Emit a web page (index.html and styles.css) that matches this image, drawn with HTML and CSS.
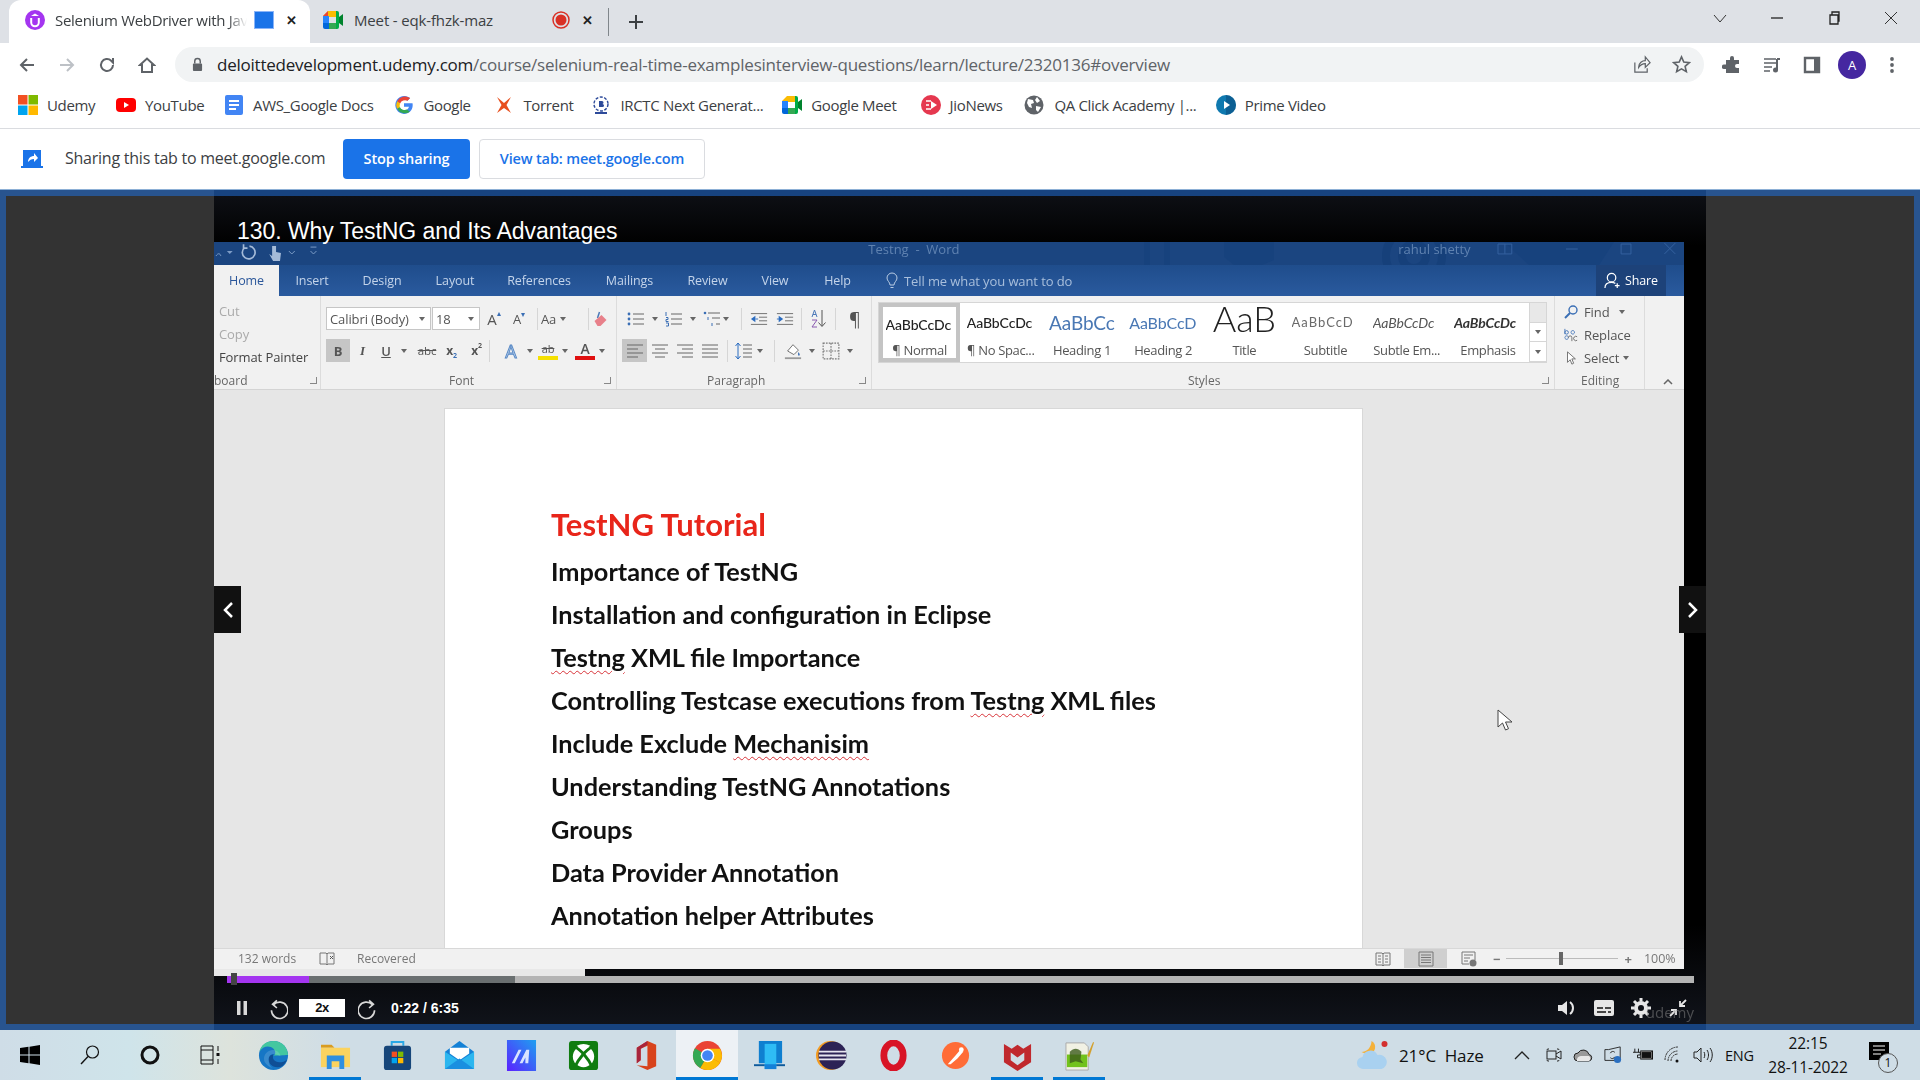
FILE: index.html
```html
<!DOCTYPE html>
<html lang="en">
<head>
    <meta charset="UTF-8">
    <title>Selenium WebDriver with Java</title>
    <link rel="stylesheet" href="styles.css">
</head>
<body>
    <svg class="sprite">
        <symbol id="i-bullets" viewBox="0 0 18 16"><g fill="#3b6fb5"><circle cx="2" cy="3" r="1.4"/><circle cx="2" cy="8" r="1.4"/><circle cx="2" cy="13" r="1.4"/></g><path d="M6 3h11M6 8h11M6 13h11" stroke="#666" fill="none"/></symbol>
        <symbol id="i-number" viewBox="0 0 18 16"><path d="M1 1v4M1 6.500h2v2H1v2h2.500M1 12h2.500v3H1" stroke="#3b6fb5" fill="none"/><path d="M6 3h11M6 8h11M6 13h11" stroke="#666" fill="none"/></symbol>
        <symbol id="i-multi" viewBox="0 0 18 16"><circle cx="2" cy="2" r="1.300" fill="#3b6fb5"/><path d="M5 6v3M9 12v3" stroke="#3b6fb5" fill="none"/><path d="M5 2h12M9 7h8M13 13h4" stroke="#666" fill="none"/></symbol>
        <symbol id="i-outdent" viewBox="0 0 20 16"><path d="M1 2h18M10 6h9M10 10h9M1 14h18" stroke="#666" fill="none"/><path d="M1 8l5-3.500v7z" fill="#2b6cc0"/><path d="M6 8h3" stroke="#2b6cc0"/></symbol>
        <symbol id="i-indent" viewBox="0 0 20 16"><path d="M1 2h18M10 6h9M10 10h9M1 14h18" stroke="#666" fill="none"/><path d="M8 8l-5-3.500v7z" fill="#2b6cc0"/><path d="M1 8h3" stroke="#2b6cc0"/></symbol>
        <symbol id="i-sort" viewBox="0 0 18 20"><path d="M12 1v16M8.500 13.500l3.500 4 3.500-4" stroke="#555" fill="none"/><path d="M2 8l2.500-7L7 8M3 5.500h3" stroke="#4a78b8" fill="none"/><path d="M2 11h5l-5 7h5" stroke="#8a5ab0" fill="none"/></symbol>
        <symbol id="i-left" viewBox="0 0 18 14"><path d="M1 1h16M1 5h11M1 9h16M1 13h11" stroke="#666" fill="none"/></symbol>
        <symbol id="i-center" viewBox="0 0 18 14"><path d="M1 1h16M4 5h10M1 9h16M4 13h10" stroke="#666" fill="none"/></symbol>
        <symbol id="i-right" viewBox="0 0 18 14"><path d="M1 1h16M6 5h11M1 9h16M6 13h11" stroke="#666" fill="none"/></symbol>
        <symbol id="i-justify" viewBox="0 0 18 14"><path d="M1 1h16M1 5h16M1 9h16M1 13h16" stroke="#666" fill="none"/></symbol>
        <symbol id="i-spacing" viewBox="0 0 18 20"><path d="M3 2v16M.5 5L3 2l2.500 3M.5 15L3 18l2.500-3" stroke="#2b6cc0" fill="none"/><path d="M8 4h9M8 8h9M8 12h9M8 16h9" stroke="#666" fill="none"/></symbol>
        <symbol id="i-shade" viewBox="0 0 20 20"><path d="M4 10l6-7 6 6-5 5z" fill="#fff" stroke="#666"/><path d="M16 11c1.500 2 2 3 1 4s-2-1-1-4z" fill="#3b6fb5"/><path d="M1 17h18v2H1z" fill="#9a9a9a"/></symbol>
        <symbol id="i-borders" viewBox="0 0 16 16"><path d="M1 1h14v14H1zM8 1v14M1 8h14" stroke="#777" stroke-dasharray="1.500 1" fill="none"/></symbol>
    </svg>

    <header class="tabstrip">
        <div class="tab tab-active">
            <svg class="tab-icon" viewBox="0 0 20 20"><circle cx="10" cy="10" r="10" fill="#a435f0"/><path d="M6.200 8v4.500a3.800 3.800 0 0 0 7.600 0V8" stroke="#fff" stroke-width="2" fill="none"/><path d="M10 3.500L14 6H6z" fill="#fff"/></svg>
            <span class="tab-title tab-title-fade">Selenium WebDriver with Jav</span>
            <svg class="share-mark" viewBox="0 0 20 18"><rect x=".5" y=".5" width="19" height="17" fill="#1a73e8" stroke="#8ab4f8"/></svg>
            <span class="tab-close">✕</span>
        </div>
        <div class="tab tab-idle">
            <svg class="tab-icon" viewBox="0 0 20 20"><path d="M0 6l5-5h8v6H6v6H0z" fill="#fbbc04"/><path d="M0 6h6v7H0z" fill="#2684fc"/><path d="M0 13h6v6H2a2 2 0 0 1-2-2z" fill="#0066da"/><path d="M6 13h7v6H6z" fill="#34a853"/><path d="M13 1v18h1a2 2 0 0 0 2-2V3a2 2 0 0 0-2-2z" fill="#00ac47"/><path d="M16 7l4-3v12l-4-3z" fill="#00832d"/><path d="M5 1v5H0z" fill="#ea4335"/></svg>
            <span class="tab-title tab-title-meet">Meet - eqk-fhzk-maz</span>
            <svg class="rec-mark" viewBox="0 0 18 18"><circle cx="9" cy="9" r="8" fill="none" stroke="#d93025" stroke-width="1.500"/><circle cx="9" cy="9" r="5.500" fill="#d93025"/></svg>
            <span class="tab-close">✕</span>
        </div>
        <span class="tab-sep"></span>
        <svg class="new-tab" viewBox="0 0 16 16"><path d="M8 1v14M1 8h14" stroke="#3c4043" stroke-width="2" fill="none"/></svg>
        <div class="window-btns">
            <svg class="win-btn" viewBox="0 0 14 14"><path d="M1 4l6 7 6-7" stroke="#333" fill="none"/></svg>
            <svg class="win-btn" viewBox="0 0 14 14"><path d="M1 7h12" stroke="#222" stroke-width="1.300" fill="none"/></svg>
            <svg class="win-btn" viewBox="0 0 14 14"><path d="M3 4h8v9H3zM5 4V1h7v9h-1" stroke="#222" stroke-width="1.300" fill="none"/></svg>
            <svg class="win-btn" viewBox="0 0 14 14"><path d="M1 1l12 12M13 1L1 13" stroke="#333" fill="none"/></svg>
        </div>
    </header>

    <div class="toolbar">
        <div class="nav-btns">
            <svg class="nav-icon" viewBox="0 0 18 18"><path d="M16 9H3M9 3L3 9l6 6" stroke="#5f6368" stroke-width="2" fill="none"/></svg>
            <svg class="nav-icon" viewBox="0 0 18 18"><path d="M2 9h13M9 3l6 6-6 6" stroke="#bdc1c6" stroke-width="2" fill="none"/></svg>
            <svg class="nav-icon" viewBox="0 0 18 18"><path d="M15 9a6 6 0 1 1-1.800-4.300L15 6.500V2" stroke="#5f6368" stroke-width="2" fill="none"/></svg>
            <svg class="nav-icon" viewBox="0 0 18 18"><path d="M2 9l7-6.500L16 9h-2v7H4V9z" stroke="#5f6368" stroke-width="2" fill="none"/></svg>
        </div>
        <div class="omnibox">
            <svg class="lock" viewBox="0 0 12 16"><path d="M3 7V4.500a3 3 0 0 1 6 0V7" stroke="#5f6368" stroke-width="1.600" fill="none"/><rect x="1" y="7" width="10" height="8" rx="1" fill="#5f6368"/></svg>
            <span class="url"><span class="url-host">deloittedevelopment.udemy.com</span>/course/selenium-real-time-examplesinterview-questions/learn/lecture/2320136#overview</span>
            <svg class="omni-icon omni-share" viewBox="0 0 20 20"><path d="M3 8v10h13v-4M7 13c0-5 4-7 7-7V2l5 6-5 5V9c-3 0-5 1-7 4z" stroke="#5f6368" stroke-width="1.300" fill="none"/></svg>
            <svg class="omni-icon" viewBox="0 0 20 20"><path d="M10 2l2.400 5.400 5.800.6-4.400 3.900 1.300 5.700-5.100-3-5.100 3 1.300-5.700L1.800 8l5.800-.6z" stroke="#5f6368" stroke-width="1.700" fill="none"/></svg>
        </div>
        <div class="ext-btns">
            <svg class="ext-icon" viewBox="0 0 20 20"><path d="M8 3a2 2 0 0 1 4 0v2h5v4h-2a2 2 0 0 0 0 4h2v5H4v-4H2a2.200 2.200 0 0 1 0-4.400h2V5h4z" fill="#5f6368"/></svg>
            <svg class="ext-icon" viewBox="0 0 20 20"><path d="M2 4h12M2 8h12M2 12h8M2 16h6" stroke="#5f6368" stroke-width="1.700" fill="none"/><path d="M15 4h3M15 4v11" stroke="#5f6368" stroke-width="2" fill="none"/><circle cx="13.500" cy="15" r="2.500" fill="#5f6368"/></svg>
            <svg class="ext-icon" viewBox="0 0 20 20"><path d="M3 3h14v14H3z" fill="none" stroke="#5f6368" stroke-width="2.400"/><path d="M12 3h5v14h-5z" fill="#5f6368"/></svg>
            <span class="avatar">A</span>
            <svg class="ext-icon" viewBox="0 0 20 20"><g fill="#5f6368"><circle cx="10" cy="4" r="1.900"/><circle cx="10" cy="10" r="1.900"/><circle cx="10" cy="16" r="1.900"/></g></svg>
        </div>
    </div>

    <nav class="bookmarks">
        <a class="bm bm-udemy"><svg viewBox="0 0 20 20"><path d="M0 0h9.500v9.500H0z" fill="#f25022"/><path d="M10.500 0H20v9.500h-9.500z" fill="#7fba00"/><path d="M0 10.500h9.500V20H0z" fill="#00a4ef"/><path d="M10.500 10.500H20V20h-9.500z" fill="#ffb900"/></svg>Udemy</a>
        <a class="bm bm-yt"><svg viewBox="0 0 20 20"><rect y="3" width="20" height="14" rx="4" fill="#f00"/><path d="M8 7l5 3-5 3z" fill="#fff"/></svg>YouTube</a>
        <a class="bm bm-docs"><svg viewBox="0 0 20 20"><rect x="1" width="18" height="20" rx="2" fill="#4285f4"/><path d="M5 6h10M5 10h10M5 14h7" stroke="#fff" stroke-width="2"/></svg>AWS_Google Docs</a>
        <a class="bm bm-google"><svg viewBox="0 0 20 20"><path d="M10 8.300v3.500h5c-.6 2.300-2.500 3.700-5 3.700a5.500 5.500 0 1 1 3.500-9.800l2.600-2.600A9 9 0 1 0 10 19c4.800 0 8.700-3.500 8.700-9 0-.6-.1-1.200-.2-1.700z" fill="#4285f4"/><path d="M3.100 6.200l3 2.200A5.500 5.500 0 0 1 13.500 5.700l2.600-2.600A9 9 0 0 0 3.100 6.200z" fill="#ea4335"/><path d="M3 13.700A9 9 0 0 0 15.900 16.800l-2.900-2.200a5.500 5.500 0 0 1-7.200-2.700z" fill="#34a853"/><path d="M3.100 6.200a9 9 0 0 0-.1 7.500l2.800-1.800a5.500 5.500 0 0 1 .3-3.500z" fill="#fbbc05"/></svg>Google</a>
        <a class="bm bm-torrent"><svg viewBox="0 0 20 20"><path d="M3 2l7 6 7-6-4.500 8L17 18l-7-5-7 5 4.500-8z" fill="#e8501e"/></svg>Torrent</a>
        <a class="bm bm-irctc"><svg viewBox="0 0 20 20"><circle cx="10" cy="9" r="7" fill="none" stroke="#2d4a9a" stroke-width="1.400" stroke-dasharray="3 1.500"/><path d="M8 6h3a1.500 1.500 0 0 1 0 3H8zM8 9h3.500a1.500 1.500 0 0 1 0 3H8z" fill="#2d4a9a"/><path d="M4 18h12" stroke="#2d4a9a" stroke-width="2"/></svg>IRCTC Next Generat...</a>
        <a class="bm bm-meet"><svg viewBox="0 0 20 20"><path d="M0 6l5-5h8v6H6v6H0z" fill="#fbbc04"/><path d="M0 6h6v7H0z" fill="#2684fc"/><path d="M0 13h6v6H2a2 2 0 0 1-2-2z" fill="#0066da"/><path d="M6 13h7v6H6z" fill="#34a853"/><path d="M13 1v18h1a2 2 0 0 0 2-2V3a2 2 0 0 0-2-2z" fill="#00ac47"/><path d="M16 7l4-3v12l-4-3z" fill="#00832d"/></svg>Google Meet</a>
        <a class="bm bm-jio"><svg viewBox="0 0 20 20"><circle cx="10" cy="10" r="10" fill="#e5384f"/><path d="M5 6h5M5 10h3M5 14h5" stroke="#fff" stroke-width="1.500"/><path d="M10 6l6 4-6 4z" fill="#fff"/></svg>JioNews</a>
        <a class="bm bm-qa"><svg viewBox="0 0 20 20"><circle cx="10" cy="10" r="9.500" fill="#5f6368"/><path d="M4 4l5 1 1 3-3 1 1 4-3-1-2-4zM13 2l3 4-3 2-2-3zM12 11l5 1-3 5-2-2z" fill="#fff"/></svg>QA Click Academy |...</a>
        <a class="bm bm-prime"><svg viewBox="0 0 20 20"><circle cx="10" cy="10" r="10" fill="#0f79af"/><path d="M10 0a10 10 0 0 1 0 20z" fill="#0a4f80" opacity=".6"/><path d="M8 6l6 4-6 4z" fill="#fff"/></svg>Prime Video</a>
    </nav>

    <div class="infobar">
        <svg class="info-icon" viewBox="0 0 24 20"><path d="M3 1h18v16H3z" fill="#1a73e8"/><path d="M1 17h22v2H1z" fill="#1a73e8"/><path d="M8 13c0-4 3-6 6-6V4l4 5-4 4v-3c-3 0-4 1-6 3z" fill="#fff"/></svg>
        <span class="info-text">Sharing this tab to meet.google.com</span>
        <button class="btn-stop">Stop sharing</button>
        <button class="btn-view">View tab: meet.google.com</button>
    </div>

    <main class="stage">
        <div class="side-panel"></div>
        <section class="player">
            <h1 class="lecture-title">130. Why TestNG and Its Advantages</h1>

            <div class="word">
                <div class="word-title">
                    <svg class="word-deco" viewBox="0 0 1470 23"><g fill="none" stroke="#16407a" stroke-width="8"><circle cx="1200" cy="14" r="28"/><circle cx="1200" cy="14" r="12"/></g><path d="M930 0h6v23h-6zM950 0h6v23h-6zM1010 0h50v18l-12 5h-28l-10-8z" fill="#17427d"/><path d="M1290 0h110l-15 23h-70z" fill="#17427d"/></svg>
                    <svg class="qat" viewBox="0 0 110 20"><path d="M2 13c2-3 4-3 5 0" stroke="#7d9cc6" fill="none"/><path d="M13 8l3 3 3-3" fill="#7d9cc6"/><path d="M36 3a6.500 6.500 0 1 1-5 1.500M30 1v4h4" stroke="#a5bbd8" stroke-width="1.700" fill="none"/><path d="M59 3v10l-3-2 4 7h7l1-8-5-1V3z" fill="#a5bbd8"/><path d="M76 8l3 3 3-3M98 4h6M98 8l3 3 3-3" stroke="#7d9cc6" fill="none"/></svg>
                    <span class="word-doc-name">Testng  -  Word</span>
                    <span class="word-user">rahul shetty</span>
                    <svg class="word-win" viewBox="0 0 190 14"><g stroke="#35629f" fill="none"><path d="M1 2h14v10H1zM8 2v10M70 7h12M126 2h10v10h-10zM170 1l11 11M181 1l-11 11"/></g></svg>
                </div>
                <div class="word-tabs">
                    <span class="wt wt-home">Home</span>
                    <span class="wt wt-insert">Insert</span>
                    <span class="wt wt-design">Design</span>
                    <span class="wt wt-layout">Layout</span>
                    <span class="wt wt-refs">References</span>
                    <span class="wt wt-mail">Mailings</span>
                    <span class="wt wt-review">Review</span>
                    <span class="wt wt-view">View</span>
                    <span class="wt wt-help">Help</span>
                    <span class="tell-me">
                        <svg viewBox="0 0 12 18"><path d="M4 13c0-3-3-4-3-7a5 5 0 0 1 10 0c0 3-3 4-3 7zM4.500 15.500h3" stroke="#b9cce4" fill="none"/></svg>
                        Tell me what you want to do
                    </span>
                    <span class="word-share">
                        <svg viewBox="0 0 18 18"><circle cx="8" cy="6" r="4.500" stroke="#fff" stroke-width="1.300" fill="none"/><path d="M1 17c0-4 3-6 7-6 2 0 3 .5 4 1M14 12v5M11.500 14.500h5" stroke="#fff" stroke-width="1.300" fill="none"/></svg>
                        Share
                    </span>
                </div>

                <div class="ribbon">
                    <div class="rgroup rg-clip">
                        <div class="rbody clip-body">
                            <span class="clip-item clip-dim">Cut</span>
                            <span class="clip-item clip-dim">Copy</span>
                            <span class="clip-item">Format Painter</span>
                        </div>
                        <div class="rlabel rlabel-clip"><span>board</span><i class="launcher"></i></div>
                    </div>

                    <div class="rgroup rg-font">
                        <div class="rbody">
                            <div class="rrow rrow-top">
                                <span class="field field-font">Calibri (Body)<i class="caret"></i></span>
                                <span class="field field-size">18<i class="caret"></i></span>
                                <span class="glyph g-grow">A<sup>▴</sup></span>
                                <span class="glyph g-shrink">A<sup>▾</sup></span>
                                <i class="rsep"></i>
                                <span class="glyph g-case">Aa<i class="caret"></i></span>
                                <i class="rsep"></i>
                                <svg class="g-eraser" viewBox="0 0 16 18"><path d="M8 2L6 8" stroke="#4a78b8" stroke-width="1.500"/><path d="M3 11l7-6 5 5-6 6H6z" fill="#e8808a"/></svg>
                            </div>
                            <div class="rrow">
                                <span class="glyph g-bold">B</span>
                                <span class="glyph g-italic">I</span>
                                <span class="glyph g-under">U</span><i class="caret caret-u"></i>
                                <span class="glyph g-abc">abc</span>
                                <span class="glyph g-script">x<sub>2</sub></span>
                                <span class="glyph g-script">x<sup>2</sup></span>
                                <i class="rsep"></i>
                                <span class="glyph g-effect">A</span><i class="caret caret-m"></i>
                                <span class="glyph g-mark">ab</span><i class="caret caret-m"></i>
                                <span class="glyph g-color">A</span><i class="caret caret-m"></i>
                            </div>
                        </div>
                        <div class="rlabel rlabel-font"><span>Font</span><i class="launcher"></i></div>
                    </div>

                    <div class="rgroup rg-para">
                        <div class="rbody">
                            <div class="rrow rrow-top rrow-para">
                                <svg class="pi pi-first"><use href="#i-bullets"/></svg><i class="caret caret-p"></i>
                                <svg class="pi"><use href="#i-number"/></svg><i class="caret caret-p"></i>
                                <svg class="pi pi-tight"><use href="#i-multi"/></svg><i class="caret"></i>
                                <i class="rsep sep-list"></i>
                                <svg class="pi"><use href="#i-outdent"/></svg>
                                <svg class="pi"><use href="#i-indent"/></svg>
                                <i class="rsep sep-indent"></i>
                                <svg class="pi pi-sort"><use href="#i-sort"/></svg>
                                <i class="rsep sep-indent"></i>
                                <span class="pilcrow">¶</span>
                            </div>
                            <div class="rrow rrow-para">
                                <span class="align-on"><svg class="pi-in"><use href="#i-left"/></svg></span>
                                <svg class="pi-al pi-al-first"><use href="#i-center"/></svg>
                                <svg class="pi-al"><use href="#i-right"/></svg>
                                <svg class="pi-al"><use href="#i-justify"/></svg>
                                <i class="rsep sep-align"></i>
                                <svg class="pi pi-sp"><use href="#i-spacing"/></svg><i class="caret"></i>
                                <i class="rsep sep-space"></i>
                                <svg class="pi pi-sp"><use href="#i-shade"/></svg><i class="caret caret-p"></i>
                                <svg class="pi pi-sp"><use href="#i-borders"/></svg><i class="caret caret-p"></i>
                            </div>
                        </div>
                        <div class="rlabel rlabel-para"><span>Paragraph</span><i class="launcher"></i></div>
                    </div>

                    <div class="rgroup rg-styles">
                        <div class="rbody gallery-wrap">
                            <div class="gallery">
                                <div class="style-card style-sel"><span class="sample s-normal">AaBbCcDc</span><span class="style-name">¶ Normal</span></div>
                                <div class="style-card"><span class="sample s-normal">AaBbCcDc</span><span class="style-name">¶ No Spac...</span></div>
                                <div class="style-card"><span class="sample s-h1">AaBbCc</span><span class="style-name">Heading 1</span></div>
                                <div class="style-card"><span class="sample s-h2">AaBbCcD</span><span class="style-name">Heading 2</span></div>
                                <div class="style-card"><span class="sample s-title">AaB</span><span class="style-name">Title</span></div>
                                <div class="style-card"><span class="sample s-sub">AaBbCcD</span><span class="style-name">Subtitle</span></div>
                                <div class="style-card"><span class="sample s-em">AaBbCcDc</span><span class="style-name">Subtle Em...</span></div>
                                <div class="style-card"><span class="sample s-emph">AaBbCcDc</span><span class="style-name">Emphasis</span></div>
                                <div class="gallery-scroll"><span></span><span><i class="caret"></i></span><span><i class="caret"></i></span></div>
                            </div>
                        </div>
                        <div class="rlabel rlabel-styles"><span>Styles</span><i class="launcher"></i></div>
                    </div>

                    <div class="rgroup rg-edit">
                        <div class="rbody clip-body edit-body">
                            <span class="edit-item"><svg viewBox="0 0 14 14"><circle cx="9" cy="5" r="4" fill="none" stroke="#3b6fb5" stroke-width="1.400"/><path d="M6 8l-5 5" stroke="#3b6fb5" stroke-width="2"/></svg>Find<i class="caret"></i></span>
                            <span class="edit-item"><svg viewBox="0 0 16 16"><path d="M1 1v6M1 5a2 2 0 1 1 4 0 2 2 0 1 1-4 0M8 5a2 2 0 1 0 0-.1M1 11a2 2 0 1 0 0-.1" stroke="#3b6fb5" fill="none"/><path d="M5 11a2 2 0 1 1 4 0v4M15 10a2.500 2.500 0 1 0 0 4" stroke="#666" fill="none"/></svg>Replace</span>
                            <span class="edit-item"><svg viewBox="0 0 14 16"><path d="M3 1v12l3-3 2 5 2-1-2-5h4z" fill="#fff" stroke="#666"/></svg>Select<i class="caret caret-tight"></i></span>
                        </div>
                        <div class="rlabel rlabel-edit"><span>Editing</span></div>
                    </div>
                    <svg class="ribbon-collapse" viewBox="0 0 10 6"><path d="M1 5l4-4 4 4" stroke="#666" stroke-width="1.500" fill="none"/></svg>
                </div>

                <div class="doc">
                    <article class="page">
                        <h2 class="doc-title">TestNG Tutorial</h2>
                        <ul class="doc-list">
                            <li>Importance of TestNG</li>
                            <li>Installation and configuration in Eclipse</li>
                            <li><u>Testng</u> XML file Importance</li>
                            <li>Controlling Testcase executions from <u>Testng</u> XML files</li>
                            <li>Include Exclude <u>Mechanisim</u></li>
                            <li>Understanding TestNG Annotations</li>
                            <li>Groups</li>
                            <li>Data Provider Annotation</li>
                            <li>Annotation helper Attributes</li>
                        </ul>
                    </article>
                </div>

                <footer class="word-status">
                    <span class="ws-words">132 words</span>
                    <svg class="ws-book" viewBox="0 0 16 16"><path d="M1 2h6l1 1v11l-1-1H1zM8 3l1-1h6v11H9l-1 1" stroke="#777" fill="none"/><path d="M11 5l3 3M14 5l-3 3" stroke="#555"/></svg>
                    <span class="ws-rec">Recovered</span>
                    <svg class="ws-view ws-read" viewBox="0 0 16 16"><path d="M1 2h6l1 1 1-1h6v12H9l-1 1-1-1H1zM8 3v11M3 5h3M3 8h3M3 11h3M10 5h3M10 8h3M10 11h3" stroke="#777" fill="none"/></svg>
                    <span class="ws-print"><svg viewBox="0 0 16 16"><path d="M1 1h14v14H1zM3 4h10M3 6.500h10M3 9h10M3 11.500h10" stroke="#777" fill="none"/></svg></span>
                    <svg class="ws-view ws-web" viewBox="0 0 16 16"><path d="M1 1h13v8M1 1v12h7M3 4h9M3 7h6M3 10h4" stroke="#777" fill="none"/><circle cx="12" cy="12" r="3.500" fill="#777"/></svg>
                    <span class="zoom-minus">−</span>
                    <span class="zoom-track"><i class="zoom-thumb"></i></span>
                    <span class="zoom-plus">+</span>
                    <span class="zoom-pct">100%</span>
                </footer>
            </div>

            <div class="word-tail"></div>
            <div class="progress">
                <span class="progress-buffer"></span>
                <span class="progress-fill"></span>
                <i class="progress-thumb"></i>
            </div>
            <div class="controls">
                <svg class="ctl ctl-pause" viewBox="0 0 12 16"><path d="M1 1h3.500v14H1zM7.500 1H11v14H7.500z" fill="#d8d8d8"/></svg>
                <svg class="ctl ctl-seek" viewBox="0 0 18 22"><path d="M7 1L3 4.500 7 8M4 5a7.500 7.500 0 1 1-2 5" transform="translate(1 3)" stroke="#d8d8d8" stroke-width="1.500" fill="none"/></svg>
                <span class="speed">2x</span>
                <svg class="ctl ctl-seek" viewBox="0 0 18 22"><path d="M10 1l4 3.500L10 8M13 5a7.500 7.500 0 1 0 2 5" transform="translate(0 3)" stroke="#d8d8d8" stroke-width="1.500" fill="none"/></svg>
                <span class="time">0:22 / 6:35</span>
                <div class="ctl-right">
                    <svg class="ctl-r" viewBox="0 0 20 18"><path d="M1 6h4l5-4v14l-5-4H1z" fill="#e6e6e6"/><path d="M13 3c4 3 4 9 0 12" stroke="#e6e6e6" stroke-width="2" fill="none"/></svg>
                    <svg class="ctl-r" viewBox="0 0 20 18"><rect y="1" width="20" height="16" rx="2" fill="#e6e6e6"/><path d="M3 9h6M11 9h6M3 13h9M14 13h3" stroke="#111" stroke-width="1.500"/></svg>
                    <svg class="ctl-r" viewBox="0 0 20 20"><circle cx="10" cy="10" r="5" fill="none" stroke="#e6e6e6" stroke-width="4"/><path d="M10 0v20M0 10h20M3 3l14 14M17 3L3 17" stroke="#e6e6e6" stroke-width="3" stroke-dasharray="3.500 13 3.500 0"/></svg>
                    <svg class="ctl-r" viewBox="0 0 20 20"><path d="M12 8l6-6M12 3v5h5M8 12l-6 6M3 12h5v5" stroke="#e6e6e6" stroke-width="1.800" fill="none"/></svg>
                </div>
                <span class="watermark">udemy</span>
            </div>

            <button class="slide-nav slide-prev"><svg viewBox="0 0 12 18"><path d="M10 2L3 9l7 7" stroke="#fff" stroke-width="2.500" fill="none"/></svg></button>
            <button class="slide-nav slide-next"><svg viewBox="0 0 12 18"><path d="M2 2l7 7-7 7" stroke="#fff" stroke-width="2.500" fill="none"/></svg></button>
            <svg class="pointer" viewBox="0 0 16 22"><path d="M1 1v17l4.500-4 3 7 3-1.300-3-6.700H15z" fill="#fff" stroke="#444"/></svg>
        </section>
        <div class="side-panel"></div>
    </main>

    <footer class="taskbar">
        <div class="sys-btns">
            <span class="slot"><svg class="ti-sm" viewBox="0 0 20 20"><path d="M0 3l8.500-1.200v7.700H0zM9.500 1.700L20 0v9.500H9.500zM0 10.500h8.500v7.700L0 17zM9.500 10.500H20V20L9.500 18.300z" fill="#000"/></svg></span>
            <span class="slot"><svg class="ti-sm" viewBox="0 0 20 20"><circle cx="12.500" cy="7" r="6" fill="none" stroke="#111" stroke-width="1.200"/><path d="M8 11.500L1 19" stroke="#111" stroke-width="1.400"/></svg></span>
            <span class="slot"><svg class="ti-sm" viewBox="0 0 20 20"><circle cx="10" cy="10" r="8" fill="none" stroke="#111" stroke-width="3"/></svg></span>
            <span class="slot"><svg class="ti-sm" viewBox="0 0 20 20"><path d="M1 1h12M1 5h12v10H1zM1 19h12M1 15v4M13 15v4M1 1v4M13 1v4M18 1v5M18 14v5" stroke="#111" fill="none"/><rect x="16.500" y="8" width="3" height="3" fill="#111"/></svg></span>
        </div>
        <div class="app-btns">
            <span class="slot-app"><svg class="ti" viewBox="0 0 32 32"><circle cx="16" cy="16" r="15" fill="#1676c5"/><path d="M31 16c0-8-6-15-15-15C9 1 3 5 1.500 12 5 6 12 5 16 9c3 3 2 7-1 7h8c5 0 8-1 8 0z" fill="#43c7a0"/><path d="M25 27c-7 3-14-1-14-7 0-3 2-5 5-5-2 4 1 8 6 8 3 0 6-1 8-3-1 3-3 5-5 7z" fill="#0f4f96"/><path d="M11 20c0-4 3-7 8-5 3 1 4 2 4 1-1-4-6-7-11-5-5 2-7 7-5 12 2 3 5 5 8 6-3-2-4-5-4-9z" fill="#fff" opacity=".15"/></svg></span>
            <span class="slot-app on"><svg class="ti" viewBox="0 0 32 32"><path d="M1 5h11l3 3h-14z" fill="#d99c20"/><rect x="1" y="8" width="30" height="20" fill="#fbd35f"/><path d="M7 16h18v14h-5v-8h-8v8H7z" fill="#2f8fe0"/></svg></span>
            <span class="slot-app"><svg class="ti" viewBox="0 0 32 32"><path d="M10 6V2h12v4" stroke="#29a8e6" stroke-width="2" fill="none"/><rect x="2" y="6" width="28" height="25" rx="3" fill="#17467a"/><path d="M10 12h5.500v5.500H10z" fill="#f25022"/><path d="M16.500 12H22v5.500h-5.500z" fill="#7fba00"/><path d="M10 18.500h5.500V24H10z" fill="#00a4ef"/><path d="M16.500 18.500H22V24h-5.500z" fill="#ffb900"/></svg></span>
            <span class="slot-app"><svg class="ti" viewBox="0 0 32 32"><path d="M1 12L16 1l15 11v18H1z" fill="#1481d6"/><path d="M6 8h20v6l-10 7-10-7z" fill="#fff"/><path d="M1 12l15 10 15-10v18H1z" fill="#2cb6ef"/><path d="M1 30l15-11 15 11z" fill="#1a8fe0"/></svg></span>
            <span class="slot-app"><svg class="ti" viewBox="0 0 32 32"><defs><linearGradient id="ma" x1="0" y1="1" x2="1" y2="0"><stop offset="0" stop-color="#5b21ff"/><stop offset="1" stop-color="#1ea0f0"/></linearGradient></defs><rect x="1" y="0" width="30" height="32" fill="url(#ma)"/><path d="M6 24l7-14h3l-7 14zM14 24l7-14h3l-1 14h-3v-6l-3 6z" fill="#d9e4ff"/></svg></span>
            <span class="slot-app"><svg class="ti" viewBox="0 0 32 32"><rect x="1" y="1" width="30" height="30" rx="3" fill="#107c10"/><circle cx="16" cy="17" r="11" fill="#fff"/><path d="M7 7c6 3 14 12 18 21M25 7C19 10 11 19 7 28" stroke="#107c10" stroke-width="3" fill="none"/><path d="M9 6q7-4 14 0l-7 5z" fill="#fff"/></svg></span>
            <span class="slot-app"><svg class="ti" viewBox="0 0 32 32"><path d="M18 1l9 4v22l-9 4-11-5 11 1V6l-7 3v12l-4 3V8z" fill="#d8431c"/><path d="M7 8l11-7v4l-7 4v12l-4 3z" fill="#a8243c"/></svg></span>
            <span class="slot-app on active"><svg class="ti" viewBox="0 0 32 32"><circle cx="16" cy="16" r="15" fill="#ea4335"/><path d="M16 16L29 23.500A15 15 0 0 1 8.500 29z" fill="#fbbc04"/><path d="M16 16L8.500 29A15 15 0 0 1 3 8.500z" fill="#34a853"/><path d="M16 9h13a15 15 0 0 1 0 14.500L16 16z" fill="#fbbc04"/><circle cx="16" cy="16" r="7" fill="#fff"/><circle cx="16" cy="16" r="5.500" fill="#4285f4"/></svg></span>
            <span class="slot-app"><svg class="ti" viewBox="0 0 32 32"><path d="M5 1h24v23H5z" fill="#0f7fd0"/><path d="M0 25h32v2H0z" fill="#0d5a9c"/><rect x="11" y="4" width="12" height="26" fill="#2fbcf5"/><rect x="11" y="25" width="12" height="5" fill="#1480d8"/></svg></span>
            <span class="slot-app"><svg class="ti" viewBox="0 0 32 32"><circle cx="15" cy="16" r="15" fill="#f39b21"/><circle cx="17" cy="16" r="14.500" fill="#2c2255"/><path d="M3 12h28M3 16h28M3 20h28" stroke="#e8e6f0" stroke-width="2"/></svg></span>
            <span class="slot-app"><svg class="ti" viewBox="0 0 32 32"><ellipse cx="16" cy="16" rx="10" ry="13" fill="none" stroke="#d81426" stroke-width="7"/></svg></span>
            <span class="slot-app"><svg class="ti" viewBox="0 0 32 32"><circle cx="16" cy="16" r="14" fill="#ff6c37"/><path d="M8 25l8-9 5-6 3 2-6 7-7 6z" fill="#fff"/><circle cx="22" cy="10" r="2.500" fill="#fff"/></svg></span>
            <span class="slot-app on"><svg class="ti" viewBox="0 0 32 32"><path d="M2 4l8 5 6-4 6 4 8-5v19l-14 9-14-9z" fill="#c0282d"/><path d="M9 13l7 5 7-5v8l-7 5-7-5z" fill="#cfdde6"/></svg></span>
            <span class="slot-app on"><svg class="ti" viewBox="0 0 32 32"><path d="M2 3h19l4 4v24H2z" fill="#f1f1e4" stroke="#aaa"/><path d="M3 15h21v13H3z" fill="#72c21c"/><path d="M6 12c4-4 8-4 12 0l-1 8 3 4-8-2-6 2z" fill="#3d5c1c" opacity=".8"/><path d="M24 16L30 2l1 .500L26 18z" fill="#d4a02d"/></svg></span>
        </div>
        <div class="tray">
            <svg class="weather" viewBox="0 0 32 30"><path d="M14 1a7 7 0 0 1-2 13c-3 0-6-1-8-2 2 0 5-1 7-3 2-3 3-5 3-8z" fill="#f4b13a"/><circle cx="27" cy="4" r="3" fill="#d32f2f"/><path d="M6 29a6 6 0 0 1-1-12 8 8 0 0 1 15-2 7 7 0 0 1 4 14z" fill="#a9d1f0"/></svg>
            <span class="tray-weather">21°C&nbsp; Haze</span>
            <svg class="t-chev" viewBox="0 0 16 10"><path d="M1 9l7-7 7 7" stroke="#222" stroke-width="1.300" fill="none"/></svg>
            <svg class="t-ico" viewBox="0 0 18 18"><path d="M3 4a1 1 0 0 1 1-1h1M13 3h1a1 1 0 0 1 1 1M3 14a1 1 0 0 0 1 1h1M15 14a1 1 0 0 1-1 1h-1" stroke="#222" fill="none"/><rect x="3" y="5" width="9" height="8" fill="none" stroke="#222"/><path d="M12 8l5-3v8l-5-3" fill="none" stroke="#222"/></svg>
            <svg class="t-ico" viewBox="0 0 20 16"><path d="M5 14a4 4 0 0 1 0-8 6 6 0 0 1 11 1.500 3.300 3.300 0 0 1 0 6.500z" fill="#9a9a9a" stroke="#222"/><path d="M4 14a4 4 0 0 1 4-5h8a3 3 0 0 1 0 5z" fill="#e8e8e8"/></svg>
            <svg class="t-ico" viewBox="0 0 20 20"><path d="M1 4h4l13-3v14l-4 1H1z" fill="none" stroke="#222"/><path d="M7 8a3 3 0 0 1 5-1M12 12a3 3 0 0 1-5 1" stroke="#222" fill="none"/><circle cx="15" cy="15" r="4" fill="#2a6fc0"/></svg>
            <svg class="t-ico" viewBox="0 0 22 14"><path d="M2 0v4M6 0v4M0 4h8v3H5v3h3" stroke="#111" fill="none"/><rect x="8" y="2" width="14" height="10" fill="#111"/><rect x="9.500" y="3.500" width="11" height="7" fill="#111" stroke="#ddd" stroke-width=".5"/></svg>
            <svg class="t-ico" viewBox="0 0 18 18"><path d="M1 14A13 13 0 0 1 14 1M4 15a10 10 0 0 1 10-10M7 15a7 7 0 0 1 7-7" stroke="#333" fill="none" stroke-dasharray="2 .6"/><circle cx="13" cy="15" r="1.500" fill="#111"/></svg>
            <svg class="t-ico" viewBox="0 0 20 18"><path d="M1 6h3l4-4v14l-4-4H1z" fill="none" stroke="#222"/><path d="M11 6c1 2 1 4 0 6M14 4c2 3 2 7 0 10M17 2c3 4 3 10 0 14" stroke="#222" fill="none"/></svg>
            <span class="tray-lang">ENG</span>
            <div class="clock"><span>22:15</span><span>28-11-2022</span></div>
            <span class="notify">
                <svg viewBox="0 0 20 18"><path d="M0 0h20v18H0z" fill="#000"/><path d="M4 4h12M4 8h12M4 12h8" stroke="#fff"/></svg>
                <b class="notify-count">1</b>
            </span>
        </div>
    </footer>
</body>
</html>
```

FILE: styles.css
```css
* {
    box-sizing: border-box;
}
html, body {
    margin: 0;
    padding: 0;
    height: 1080px;
    overflow: hidden;
}
body {
    width: 1920px;
    display: flex;
    flex-direction: column;
    font-family: "Open Sans", "Liberation Sans", sans-serif;
    background: #fff;
    color: #3c4043;
}
.sprite {
    display: none;
}

/* browser tabs */
.tabstrip {
    height: 43px;
    flex: none;
    display: flex;
    align-items: center;
    background: #dee1e6;
    padding-left: 9px;
}
.tab {
    height: 43px;
    display: flex;
    align-items: center;
    padding-bottom: 3px;
    font-size: 15px;
    letter-spacing: -.15px;
}
.tab-active {
    width: 301px;
    background: #fff;
    border-radius: 12px 12px 0 0;
    padding-left: 16px;
}
.tab-idle {
    width: 298px;
    padding-left: 13px;
}
.tab-icon {
    width: 20px;
    height: 20px;
    flex: none;
}
.tab-title {
    margin-left: 10px;
    white-space: nowrap;
    overflow: hidden;
}
.tab-title-fade {
    width: 192px;
    letter-spacing: -.3px;
    -webkit-mask-image: linear-gradient(90deg, #000 90%, transparent);
    mask-image: linear-gradient(90deg, #000 90%, transparent);
}
.tab-title-meet {
    margin-left: 11px;
    width: 198px;
}
.share-mark {
    width: 20px;
    height: 18px;
    margin-left: 7px;
    flex: none;
}
.rec-mark {
    width: 18px;
    height: 18px;
    flex: none;
}
.tab-close {
    font-size: 13px;
    color: #222;
    margin-left: 12px;
    font-weight: 700;
}
.tab-sep {
    width: 1px;
    height: 28px;
    background: #80868b;
}
.new-tab {
    width: 16px;
    height: 16px;
    margin-left: 19px;
}
.window-btns {
    margin-left: auto;
    width: 207px;
    display: flex;
    justify-content: space-between;
    padding: 0 22px 7px 0;
}
.win-btn {
    width: 14px;
    height: 14px;
}

/* toolbar */
.toolbar {
    height: 43px;
    flex: none;
    display: flex;
    align-items: center;
    background: #fff;
}
.nav-btns {
    width: 175px;
    display: flex;
    padding-left: 18px;
    gap: 22px;
}
.nav-icon {
    width: 18px;
    height: 18px;
}
.omnibox {
    width: 1529px;
    height: 35px;
    border-radius: 18px;
    background: #f1f3f4;
    display: flex;
    align-items: center;
    padding: 0 13px 0 17px;
}
.lock {
    width: 11px;
    height: 15px;
    flex: none;
}
.url {
    margin-left: 14px;
    font-size: 17px;
    letter-spacing: -.23px;
    color: #5f6368;
    white-space: nowrap;
}
.url-host {
    color: #202124;
}
.omni-icon {
    width: 19px;
    height: 19px;
    flex: none;
    margin-left: 21px;
}
.omni-share {
    margin-left: auto;
}
.ext-btns {
    flex: 1;
    display: flex;
    align-items: center;
    padding-left: 18px;
    gap: 20px;
}
.ext-icon {
    width: 20px;
    height: 20px;
    flex: none;
}
.avatar {
    width: 28px;
    height: 28px;
    margin: 0 -4px;
    border-radius: 50%;
    background: #4527a0;
    color: #fff;
    font-size: 13px;
    display: flex;
    align-items: center;
    justify-content: center;
    flex: none;
}

/* bookmarks */
.bookmarks {
    height: 43px;
    flex: none;
    display: flex;
    align-items: center;
    padding: 0 0 4px 18px;
    border-bottom: 1px solid #dadce0;
    font-size: 15px;
    letter-spacing: -.33px;
    color: #3c4043;
}
.bm {
    display: flex;
    align-items: center;
    white-space: nowrap;
}
.bm svg {
    width: 20px;
    height: 20px;
    margin-right: 9px;
    flex: none;
}
.bm-udemy { width: 98px; }
.bm-yt { width: 108px; }
.bm-docs { width: 170.400px; }
.bm-google { width: 100px; }
.bm-torrent { width: 97px; }
.bm-irctc { width: 190.800px; }
.bm-meet { width: 138.400px; }
.bm-jio { width: 103.800px; }
.bm-qa { width: 191.400px; }
.bm-qa svg { margin-right: 10px; }

/* sharing infobar */
.infobar {
    height: 60px;
    flex: none;
    display: flex;
    align-items: center;
    padding-left: 20px;
    background: #fff;
}
.info-icon {
    width: 24px;
    height: 20px;
    flex: none;
}
.info-text {
    margin: 0 0 2px 21px;
    width: 278px;
    font-size: 16px;
    letter-spacing: -.24px;
    color: #3c4043;
    white-space: nowrap;
}
.btn-stop, .btn-view {
    height: 40px;
    padding: 0 0 2px;
    border-radius: 4px;
    font: 600 14.500px "Open Sans", sans-serif;
    letter-spacing: -.15px;
    cursor: pointer;
}
.btn-stop {
    width: 127px;
    background: #1a73e8;
    border: none;
    color: #fff;
}
.btn-view {
    width: 226px;
    margin-left: 9px;
    background: #fff;
    border: 1px solid #dadce0;
    color: #1a73e8;
}

/* shared tab content */
.stage {
    flex: 1;
    min-height: 0;
    display: flex;
    padding: 6px;
    border-top: 1px solid #8db0d6;
    background: linear-gradient(90deg, #28548f 214px, #17437f 214px, #17437f 1706px, #28548f 1706px);
}
.side-panel {
    width: 208px;
    background: #333;
}
.player {
    width: 1492px;
    position: relative;
    display: flex;
    flex-direction: column;
    background: linear-gradient(#0d0f14, #000 6%, #000 88%, #10131a);
}
.lecture-title {
    height: 46px;
    margin: 0;
    padding: 22px 0 0 23px;
    font: 400 23px/26px "Liberation Sans", sans-serif;
    letter-spacing: -.04px;
    color: #fff;
    position: relative;
    z-index: 1;
}

/* word window */
.word {
    width: 1470px;
    display: flex;
    flex-direction: column;
    font-family: "Open Sans", sans-serif;
    filter: blur(.35px);
}
.word-title {
    height: 23px;
    position: relative;
    display: flex;
    align-items: flex-start;
    background: #1b4580;
    overflow: hidden;
    font-size: 13px;
    line-height: 15px;
    color: #5f82b0;
}
.word-deco {
    position: absolute;
    left: 0;
    top: 0;
    width: 1470px;
    height: 23px;
}
.qat {
    width: 110px;
    height: 20px;
    margin: 1px 0 0 0;
    position: relative;
}
.word-doc-name {
    margin: 0 0 0 546px;
    width: 538px;
    white-space: pre;
    position: relative;
}
.word-user {
    position: relative;
    width: 90px;
}
.word-win {
    width: 190px;
    height: 14px;
    margin: 0 0 0 10px;
    position: relative;
}
.word-tabs {
    height: 31px;
    display: flex;
    align-items: center;
    background: linear-gradient(#1f4d8c, #2a5a9e);
    font-size: 12.500px;
    letter-spacing: -.1px;
    color: #c4d4ea;
}
.wt {
    text-align: center;
    height: 100%;
    line-height: 31px;
}
.wt-home {
    width: 65px;
    background: #f1f1f1;
    color: #2b579a;
}
.wt-insert { width: 66px; }
.wt-design { width: 74px; }
.wt-layout { width: 72px; }
.wt-refs { width: 96px; }
.wt-mail { width: 85px; }
.wt-review { width: 71px; }
.wt-view { width: 64px; }
.wt-help { width: 61px; }
.tell-me {
    margin-left: 18px;
    display: flex;
    align-items: center;
    gap: 6px;
    font-size: 13px;
    color: #a9bfdc;
}
.tell-me svg {
    width: 12px;
    height: 18px;
}
.word-share {
    margin-left: auto;
    margin-right: 18px;
    width: 70px;
    height: 100%;
    background: #1d4279;
    color: #fff;
    display: flex;
    align-items: center;
    justify-content: center;
    gap: 4px;
}
.word-share svg {
    width: 17px;
    height: 17px;
}

/* ribbon */
.ribbon {
    height: 94px;
    display: flex;
    background: #f1f1f1;
    border-bottom: 1px solid #d4d4d4;
    font-size: 12px;
    letter-spacing: -.1px;
    color: #555;
}
.rgroup {
    display: flex;
    flex-direction: column;
    padding-top: 11px;
    overflow: hidden;
    border-right: 1px solid #dcdcdc;
}
.rbody {
    height: 65px;
    flex: none;
}
.rlabel {
    height: 17px;
    flex: none;
    display: flex;
    align-items: center;
    color: #666;
    font-size: 12px;
    letter-spacing: 0;
}
.launcher {
    width: 7px;
    height: 7px;
    margin-left: auto;
    border-right: 1px solid #888;
    border-bottom: 1px solid #888;
}
.rg-clip {
    width: 107px;
}
.clip-body {
    display: flex;
    flex-direction: column;
    margin-top: -7px;
    height: 72px;
}
.clip-item {
    height: 23px;
    line-height: 23px;
    padding-left: 5px;
    white-space: nowrap;
    font-size: 13px;
    color: #444;
}
.clip-dim {
    color: #aaa;
}
.rlabel-clip {
    padding: 0 3px 0 0;
}
.rg-font {
    width: 296px;
}
.rrow {
    height: 23px;
    display: flex;
    align-items: center;
    padding-left: 5px;
}
.rrow-top {
    height: 23px;
    margin-bottom: 9px;
}
.field {
    height: 23px;
    flex: none;
    background: #fff;
    border: 1px solid #c6c6c6;
    display: flex;
    align-items: center;
    padding-left: 3px;
    font-size: 13px;
    color: #555;
    white-space: nowrap;
}
.field-font {
    width: 105px;
}
.field-size {
    width: 48px;
    margin-left: 1px;
}
.field .caret {
    margin-left: auto;
    margin-right: 5px;
}
.caret {
    display: inline-block;
    width: 0;
    height: 0;
    border: 3px solid transparent;
    border-top: 4px solid #666;
    border-bottom: 0;
    flex: none;
}
.caret-u {
    margin: 0 8px 0 4px;
}
.caret-m {
    margin: 0 5px 0 4px;
}
.caret-p {
    margin: 0 3px;
}
.glyph {
    display: flex;
    align-items: center;
    justify-content: center;
    font-family: "Open Sans", sans-serif;
    color: #555;
    flex: none;
}
.glyph sup, .glyph sub {
    font-size: 8px;
    line-height: 1;
}
.g-grow {
    width: 24px;
    margin-left: 2px;
    font-size: 15px;
}
.g-shrink {
    width: 24px;
    margin-left: 1px;
    font-size: 13px;
}
.g-grow sup, .g-shrink sup {
    color: #3b6fb5;
    align-self: flex-start;
}
.g-case {
    width: 41px;
    font-size: 13px;
    gap: 4px;
    justify-content: flex-start;
    margin-left: -3px;
}
.g-eraser {
    width: 17px;
    height: 18px;
    margin-left: -4px;
}
.rsep {
    width: 1px;
    height: 22px;
    background: #d6d6d6;
    flex: none;
}
.g-bold {
    width: 24px;
    height: 23px;
    background: #c6c6c6;
    font-weight: 700;
    font-size: 13px;
}
.g-italic {
    width: 25px;
    font-style: italic;
    font-family: "Liberation Serif", serif;
    font-weight: 700;
    font-size: 13px;
}
.g-under {
    width: 22px;
    text-decoration: underline;
    font-size: 13px;
    font-weight: 600;
}
.g-abc {
    width: 24px;
    text-decoration: line-through;
    font-size: 11.500px;
}
.g-script {
    width: 25px;
    font-weight: 700;
    font-size: 12px;
}
.g-script sub, .g-script sup {
    font-size: 7px;
}
.g-script sub {
    color: #3b6fb5;
    align-self: flex-end;
}
.g-script sup {
    align-self: flex-start;
}
.g-effect {
    width: 24px;
    margin-left: 9px;
    font-size: 18px;
    color: #d9e6f5;
    -webkit-text-stroke: 1px #5a8ac6;
}
.g-mark {
    width: 20px;
    font-size: 11px;
    height: 18px;
    border-bottom: 4px solid #f5e000;
    line-height: 1;
    text-decoration: line-through;
}
.g-color {
    width: 20px;
    margin-left: 2px;
    font-size: 14px;
    height: 18px;
    border-bottom: 4px solid #e01010;
    font-weight: 600;
}
.rlabel-font {
    padding-right: 5px;
}
.rlabel-font span {
    margin-left: 128px;
}
.rg-para {
    width: 255px;
}
.pi {
    width: 18px;
    height: 16px;
    margin: 0 4px;
    flex: none;
}
.pi-first {
    margin-left: 5px;
}
.pi-tight {
    margin-right: 2px;
}
.pi-sort {
    height: 20px;
    margin: 0 4px 0 8px;
}
.pi-sp {
    height: 20px;
}
.pilcrow {
    font-size: 18px;
    margin-left: 13px;
    color: #555;
    line-height: 1;
}
.rrow-top .rsep {
    margin: 0 6px;
}
.rrow-para .sep-list {
    margin: 0 4px 0 12px;
}
.rrow-para .sep-indent {
    margin: 0 0 0 3px;
}
.sep-align {
    margin: 0 3px 0 8px;
}
.sep-space {
    margin: 0 5px 0 11px;
}
.align-on {
    width: 25px;
    height: 23px;
    background: #c6c6c6;
    display: flex;
    align-items: center;
    justify-content: center;
}
.pi-in {
    width: 18px;
    height: 14px;
}
.pi-al {
    width: 18px;
    height: 14px;
    margin-left: 7px;
    flex: none;
}
.pi-al-first {
    margin-left: 4px;
}
.rlabel-para {
    padding-right: 5px;
}
.rlabel-para span {
    margin-left: 90px;
}
.rg-styles {
    width: 683px;
    padding-top: 6px;
}
.gallery-wrap {
    height: 70px;
}
.gallery {
    width: 669px;
    height: 61px;
    margin-left: 6px;
    display: flex;
    background: #fff;
    border: 1px solid #d6d6d6;
}
.style-card {
    width: 81.200px;
    height: 59px;
    display: flex;
    flex-direction: column;
    align-items: center;
    overflow: hidden;
}
.style-sel {
    border: 4px solid #c4c4c4;
}
.sample {
    height: 38px;
    width: 68px;
    overflow: hidden;
    white-space: nowrap;
    line-height: 39px;
    color: #222;
    font-family: "Lato", sans-serif;
    font-size: 14px;
    text-align: left;
    flex: none;
}
.style-sel .sample {
    height: 34px;
    line-height: 35px;
}
.s-normal {
    font-weight: 500;
}
.s-h1 {
    font-size: 19px;
    width: 66px;
    color: #4a78b4;
}
.s-h2 {
    font-size: 16px;
    color: #4a78b4;
}
.s-title {
    font-size: 36px;
    font-weight: 300;
    line-height: 30px;
    color: #222;
    text-align: center;
}
.s-sub {
    letter-spacing: 1px;
    color: #6a6a6a;
    font-size: 13px;
}
.s-em {
    font-style: italic;
    color: #555;
}
.s-emph {
    font-style: italic;
    font-weight: 700;
    color: #333;
}
.style-name {
    font-size: 13px;
    letter-spacing: -.35px;
    line-height: 18px;
    color: #555;
    white-space: nowrap;
}
.gallery-scroll {
    flex: 1;
    display: flex;
    flex-direction: column;
    border-left: 1px solid #d6d6d6;
}
.gallery-scroll span {
    flex: 1;
    display: flex;
    align-items: center;
    justify-content: center;
    border-bottom: 1px solid #d6d6d6;
}
.gallery-scroll span:first-child {
    background: #e8e8e8;
}
.rlabel-styles {
    padding-right: 5px;
}
.rlabel-styles span {
    margin-left: 316px;
}
.rg-edit {
    width: 90px;
}
.edit-item {
    height: 23px;
    display: flex;
    align-items: center;
    gap: 6px;
    padding-left: 9px;
    white-space: nowrap;
    font-size: 13px;
    color: #555;
}
.edit-item svg {
    width: 14px;
    height: 14px;
    flex: none;
}
.edit-item .caret {
    margin-left: 3px;
}
.edit-item .caret-tight {
    margin-left: -2px;
}
.rlabel-edit {
    padding-left: 26px;
}
.ribbon-collapse {
    width: 10px;
    height: 6px;
    margin: 83px 0 0 18px;
}

/* document */
.doc {
    height: 558px;
    background: #e6e6e6;
    padding: 18px 0 0 230px;
    overflow: hidden;
}
.page {
    width: 919px;
    height: 560px;
    background: #fff;
    border: 1px solid #d8d8d8;
    padding: 94px 0 0 106px;
    font-family: "Lato", sans-serif;
    font-weight: 700;
    color: #111;
}
.doc-title {
    margin: 0 0 5px;
    font-size: 31px;
    line-height: 42px;
    font-weight: 700;
    color: #e8251a;
}
.doc-list {
    margin: 0;
    padding: 0;
    list-style: none;
    font-size: 25.300px;
    line-height: 43px;
}
.doc-list li {
    white-space: nowrap;
}
.doc-list u {
    text-decoration: underline wavy #d8343a 1px;
    text-underline-offset: 3px;
}

.word-status {
    height: 21px;
    display: flex;
    align-items: center;
    padding-bottom: 1px;
    background: #f1f1f1;
    border-top: 1px solid #d8d8d8;
    font-size: 12px;
    color: #777;
}
.ws-words {
    margin-left: 24px;
    width: 81px;
}
.ws-book {
    width: 16px;
    height: 16px;
}
.ws-rec {
    margin-left: 22px;
    width: 1006px;
}
.ws-view {
    width: 16px;
    height: 16px;
    flex: none;
}
.ws-read {
    margin-left: 12px;
}
.ws-print {
    width: 43px;
    height: 100%;
    background: #cfcfcf;
    margin-left: 13px;
    display: flex;
    align-items: center;
    justify-content: center;
}
.ws-print svg {
    width: 16px;
    height: 16px;
}
.ws-web {
    margin-left: 14px;
}
.zoom-minus {
    margin-left: 16px;
    font-size: 13px;
    font-weight: 700;
}
.zoom-track {
    width: 112px;
    height: 1px;
    background: #bbb;
    margin: 0 6px;
    position: relative;
}
.zoom-thumb {
    position: absolute;
    left: 53px;
    top: -6px;
    width: 4px;
    height: 13px;
    background: #666;
}
.zoom-plus {
    font-size: 13px;
    font-weight: 700;
}
.zoom-pct {
    margin-left: 12px;
    font-size: 12.500px;
}

/* player bottom */
.word-tail {
    width: 371px;
    height: 7px;
    background: #e8e8e8;
}
.progress {
    position: relative;
    height: 7px;
    margin: 0 12px 0 13px;
    background: #b4b4b4;
    display: flex;
}
.progress-fill {
    position: absolute;
    left: 0;
    top: 0;
    width: 82px;
    height: 100%;
    background: #a435f0;
}
.progress-buffer {
    position: absolute;
    left: 0;
    top: 0;
    width: 288px;
    height: 100%;
    background: #6a6f70;
}
.progress-thumb {
    position: absolute;
    left: 4px;
    top: -3px;
    width: 6px;
    height: 12px;
    background: #444;
}
.controls {
    height: 41px;
    position: relative;
    display: flex;
    align-items: center;
    padding: 8px 18px 0 22px;
}
.ctl {
    flex: none;
}
.ctl-pause {
    width: 12px;
    height: 16px;
}
.ctl-seek {
    width: 20px;
    height: 24px;
    margin-left: 20px;
}
.speed {
    width: 46px;
    height: 18px;
    margin-left: 11px;
    background: #fff;
    color: #111;
    font: 700 13px/18px "Liberation Sans", sans-serif;
    text-align: center;
    letter-spacing: -.5px;
}
.speed + .ctl-seek {
    margin-left: 13px;
}
.time {
    margin-left: 13px;
    font: 700 14px "Liberation Sans", sans-serif;
    color: #fff;
}
.ctl-right {
    margin-left: auto;
    display: flex;
    gap: 17px;
}
.ctl-r {
    width: 20px;
    height: 20px;
}
.watermark {
    position: absolute;
    right: 12px;
    top: 19px;
    font: 400 15px "Open Sans", sans-serif;
    color: #8a8a8a;
    opacity: .5;
}
.slide-nav {
    position: absolute;
    top: 390px;
    width: 27px;
    height: 47px;
    padding: 0;
    border: none;
    background: #111;
    display: flex;
    align-items: center;
    justify-content: center;
}
.slide-nav svg {
    width: 12px;
    height: 18px;
}
.slide-prev {
    left: 0;
}
.slide-next {
    right: 0;
}
.pointer {
    position: absolute;
    left: 1283px;
    top: 513px;
    width: 16px;
    height: 22px;
}

/* windows taskbar */
.taskbar {
    height: 50px;
    flex: none;
    display: flex;
    align-items: center;
    background: linear-gradient(90deg, #cfdde7 0, #cfe4ea 130px, #dde3dc 230px, #cfdde6 340px);
}
.sys-btns {
    display: flex;
    width: 242px;
    flex: none;
}
.slot {
    width: 60px;
    display: flex;
    justify-content: center;
}
.ti-sm {
    width: 20px;
    height: 20px;
}
.app-btns {
    display: flex;
    height: 100%;
}
.slot-app {
    width: 62px;
    height: 100%;
    display: flex;
    align-items: center;
    justify-content: center;
    position: relative;
}
.slot-app.on::after {
    content: "";
    position: absolute;
    left: 5px;
    right: 5px;
    bottom: 0;
    height: 3px;
    background: #0078d4;
}
.slot-app.active {
    background: #edf1f5;
}
.slot-app.active::after {
    left: 0;
    right: 0;
}
.ti {
    width: 31px;
    height: 31px;
}
.tray {
    flex: 1;
    display: flex;
    align-items: center;
    color: #111;
    padding-left: 247px;
}
.weather {
    width: 33px;
    height: 30px;
    flex: none;
}
.tray-weather {
    margin-left: 9px;
    width: 100px;
    font-size: 17px;
    letter-spacing: -.1px;
    white-space: nowrap;
}
.t-chev {
    width: 16px;
    height: 10px;
    margin-left: 15px;
    margin-right: 13px;
    flex: none;
}
.t-ico {
    width: 20px;
    height: 18px;
    margin-right: 10px;
    flex: none;
}
.tray-lang {
    width: 40px;
    margin-left: 2px;
    font-size: 14.500px;
    letter-spacing: -.2px;
    flex: none;
}
.clock {
    width: 90px;
    margin-left: -2px;
    flex: none;
    display: flex;
    flex-direction: column;
    align-items: center;
    font-size: 15.500px;
    line-height: 24px;
    letter-spacing: -.15px;
}
.notify {
    position: relative;
    flex: none;
    margin-left: 16px;
    width: 20px;
    height: 18px;
    margin-top: -8px;
}
.notify svg {
    width: 20px;
    height: 18px;
    display: block;
}
.notify-count {
    position: absolute;
    left: 9px;
    top: 11px;
    width: 20px;
    height: 20px;
    border-radius: 50%;
    border: 1px solid #555;
    background: #cfdde6;
    font-size: 12px;
    font-weight: 400;
    line-height: 18px;
    text-align: center;
}
```
